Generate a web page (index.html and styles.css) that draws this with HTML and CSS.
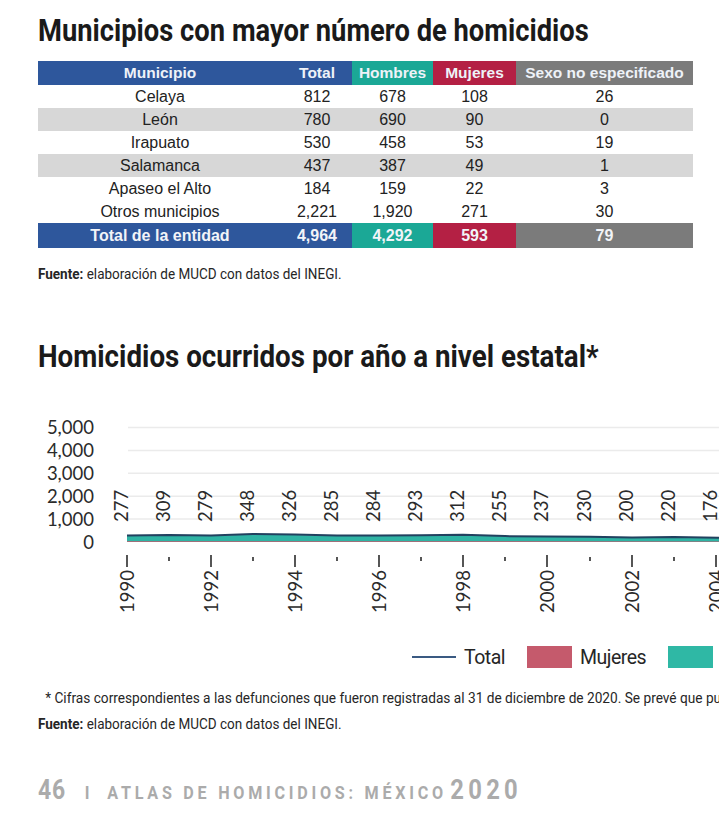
FILE: index.html
```html
<!DOCTYPE html>
<html lang="es">
<head>
<meta charset="utf-8">
<title>Atlas de homicidios</title>
<link rel="stylesheet" href="styles.css">
</head>
<body>
<div class="page">
  <section class="block">
    <h1 class="title t1">Municipios con mayor número de homicidios</h1>
    <table class="mun">
      <colgroup>
        <col class="c1"><col class="c2"><col class="c3"><col class="c4"><col class="c5">
      </colgroup>
      <thead>
        <tr>
          <th class="bg-blue">Municipio</th>
          <th class="bg-blue">Total</th>
          <th class="bg-teal">Hombres</th>
          <th class="bg-red">Mujeres</th>
          <th class="bg-gray">Sexo no especificado</th>
        </tr>
      </thead>
      <tbody>
        <tr><td>Celaya</td><td>812</td><td>678</td><td>108</td><td>26</td></tr>
        <tr class="alt"><td>León</td><td>780</td><td>690</td><td>90</td><td>0</td></tr>
        <tr><td>Irapuato</td><td>530</td><td>458</td><td>53</td><td>19</td></tr>
        <tr class="alt"><td>Salamanca</td><td>437</td><td>387</td><td>49</td><td>1</td></tr>
        <tr><td>Apaseo el Alto</td><td>184</td><td>159</td><td>22</td><td>3</td></tr>
        <tr><td>Otros municipios</td><td>2,221</td><td>1,920</td><td>271</td><td>30</td></tr>
        <tr class="tot">
          <td class="bg-blue">Total de la entidad</td>
          <td class="bg-blue">4,964</td>
          <td class="bg-teal">4,292</td>
          <td class="bg-red">593</td>
          <td class="bg-gray">79</td>
        </tr>
      </tbody>
    </table>
    <p class="src src1"><b>Fuente:</b> elaboración de MUCD con datos del INEGI.</p>
    <h2 class="title t2">Homicidios ocurridos por año a nivel estatal*</h2>
  </section>

  <svg class="chart" width="719" height="225" viewBox="0 400 719 225" xmlns="http://www.w3.org/2000/svg">
    <g class="grid" stroke="#ebebeb" stroke-width="1.5">
      <line x1="128" y1="427.5" x2="719" y2="427.5"/>
      <line x1="128" y1="450.4" x2="719" y2="450.4"/>
      <line x1="128" y1="473.3" x2="719" y2="473.3"/>
      <line x1="128" y1="496.2" x2="719" y2="496.2"/>
      <line x1="128" y1="519.1" x2="719" y2="519.1"/>
    </g>
    <g class="ylab" text-anchor="end" font-size="18.5" fill="#2b2b2b">
      <text x="94" y="434">5,000</text>
      <text x="94" y="456.9">4,000</text>
      <text x="94" y="479.8">3,000</text>
      <text x="94" y="502.7">2,000</text>
      <text x="94" y="525.6">1,000</text>
      <text x="94" y="548.5">0</text>
    </g>
    <polygon fill="#2fb3a4" points="127,542 127,535.8 169,535.2 211,535.8 253,534.5 295,534.9 337,535.6 379,535.7 421,535.5 463,535.1 505,536.3 547,536.6 590,536.8 632,537.4 674,537 719,537.8 719,542"/>
    <polygon fill="#c45a6c" points="127,542 127,541.3 719,541.4 719,542"/>
    <polyline fill="none" stroke="#21415f" stroke-width="2" points="127,535.6 169,534.9 211,535.6 253,534 295,534.5 337,535.4 379,535.4 421,535.2 463,534.8 505,536.1 547,536.5 590,536.7 632,537.4 674,536.9 719,537.8"/>
    <g class="vlab" font-size="18.5" fill="#2b2b2b">
      <text transform="translate(128,522) rotate(-90)">277</text>
      <text transform="translate(170,522) rotate(-90)">309</text>
      <text transform="translate(212,522) rotate(-90)">279</text>
      <text transform="translate(254,522) rotate(-90)">348</text>
      <text transform="translate(296,522) rotate(-90)">326</text>
      <text transform="translate(338,522) rotate(-90)">285</text>
      <text transform="translate(380,522) rotate(-90)">284</text>
      <text transform="translate(422,522) rotate(-90)">293</text>
      <text transform="translate(464,522) rotate(-90)">312</text>
      <text transform="translate(506,522) rotate(-90)">255</text>
      <text transform="translate(548,522) rotate(-90)">237</text>
      <text transform="translate(591,522) rotate(-90)">230</text>
      <text transform="translate(633,522) rotate(-90)">200</text>
      <text transform="translate(675,522) rotate(-90)">220</text>
      <text transform="translate(717,522) rotate(-90)">176</text>
    </g>
    <g class="ticks" stroke="#2b2b2b" stroke-width="1.6">
      <line x1="127" y1="555" x2="127" y2="567"/>
      <line x1="169" y1="557" x2="169" y2="561"/>
      <line x1="211" y1="555" x2="211" y2="567"/>
      <line x1="253" y1="557" x2="253" y2="561"/>
      <line x1="295" y1="555" x2="295" y2="567"/>
      <line x1="337" y1="557" x2="337" y2="561"/>
      <line x1="379" y1="555" x2="379" y2="567"/>
      <line x1="421" y1="557" x2="421" y2="561"/>
      <line x1="463" y1="555" x2="463" y2="567"/>
      <line x1="505" y1="557" x2="505" y2="561"/>
      <line x1="547" y1="555" x2="547" y2="567"/>
      <line x1="590" y1="557" x2="590" y2="561"/>
      <line x1="632" y1="555" x2="632" y2="567"/>
      <line x1="674" y1="557" x2="674" y2="561"/>
      <line x1="716" y1="555" x2="716" y2="567"/>
    </g>
    <g class="xlab" font-size="18.5" fill="#2b2b2b" text-anchor="end">
      <text transform="translate(134,570) rotate(-90)">1990</text>
      <text transform="translate(218,570) rotate(-90)">1992</text>
      <text transform="translate(302,570) rotate(-90)">1994</text>
      <text transform="translate(386,570) rotate(-90)">1996</text>
      <text transform="translate(470,570) rotate(-90)">1998</text>
      <text transform="translate(554,570) rotate(-90)">2000</text>
      <text transform="translate(639,570) rotate(-90)">2002</text>
      <text transform="translate(723,570) rotate(-90)">2004</text>
    </g>
  </svg>

  <div class="legend">
    <span class="lg-item"><span class="lg-line"></span>Total</span>
    <span class="lg-item"><span class="lg-box red"></span>Mujeres</span>
    <span class="lg-item"><span class="lg-box teal"></span>Hombres</span>
  </div>

  <section class="block notes">
    <p class="note">* Cifras correspondientes a las defunciones que fueron registradas al 31 de diciembre de 2020. Se prevé que puedan actualizarse.</p>
    <p class="src src2"><b>Fuente:</b> elaboración de MUCD con datos del INEGI.</p>
    <footer class="foot">
      <span class="pg">46</span>
      <span class="sep">I</span>
      <span class="book">ATLAS DE HOMICIDIOS: MÉXICO</span>
      <span class="yr">2020</span>
    </footer>
  </section>
</div>
</body>
</html>
```

FILE: styles.css
```css
* { box-sizing: border-box; }
html, body { margin: 0; padding: 0; background: #ffffff; }
body { width: 719px; height: 816px; overflow: hidden; color: #1c1c1c; }
.page { width: 719px; overflow: hidden; }
.block { padding-left: 38px; }

.title {
  font-family: "Roboto", "Liberation Sans", sans-serif;
  font-weight: 700;
  font-size: 32px;
  line-height: 38px;
  margin: 0;
  color: #1a1a1a;
  white-space: nowrap;
  transform-origin: 0 50%;
}
.t1 { padding-top: 11px; transform: scaleX(0.854); }
.t2 { margin-top: 54px; transform: scaleX(0.867); }

.mun {
  margin-top: 12px;
  border-collapse: collapse;
  table-layout: fixed;
  width: 655px;
  font-family: "Liberation Sans", Arial, sans-serif;
  font-size: 16px;
  color: #222;
}
.c1 { width: 244px; }
.c2 { width: 70px; }
.c3 { width: 81px; }
.c4 { width: 83px; }
.c5 { width: 177px; }
.mun th, .mun td { padding: 0; text-align: center; white-space: nowrap; }
.mun th {
  height: 24px;
  font-size: 15.5px;
  font-weight: 700;
  color: #eef2f8;
}
.mun td { height: 23px; }
.mun tr.alt td { background: #d7d7d7; }
.mun tr.tot td { height: 25px; font-weight: 700; color: #f2f4f8; }
.bg-blue { background: #2e579c; }
.bg-teal { background: #1ba896; }
.bg-red { background: #b42044; }
.bg-gray { background: #7b7b7b; }

.src, .note {
  font-family: "Roboto", "Liberation Sans", sans-serif;
  line-height: 18px;
  margin: 0;
  color: #262626;
  white-space: nowrap;
  transform: scaleX(0.9);
  transform-origin: 0 50%;
}
.src { font-size: 15px; }
.note { font-size: 15.2px; }
.src b { font-weight: 700; }
.src1 { margin-top: 17px; }

.chart { display: block; margin-top: 25px; }
.chart text { font-family: "Lato", "Liberation Sans", sans-serif; }

.legend {
  display: flex;
  gap: 22px;
  padding-left: 412px;
  margin-top: 20px;
  height: 24px;
  align-items: center;
  white-space: nowrap;
  font-family: "Roboto", "Liberation Sans", sans-serif;
  font-size: 19.5px;
  letter-spacing: -0.5px;
  color: #262626;
}
.lg-item { display: flex; align-items: center; gap: 8px; }
.lg-line { width: 44px; height: 2px; background: #3a5a82; }
.lg-box { width: 45px; height: 22px; }
.lg-box.red { background: #c55a6c; }
.lg-box.teal { background: #2fb8a5; }

.note { margin-top: 20px; padding-left: 8px; }
.src2 { margin-top: 8px; }

.foot {
  margin-top: 40px;
  display: flex;
  align-items: baseline;
  color: #ababab;
  font-family: "Roboto", "Liberation Sans", sans-serif;
  font-weight: 700;
  white-space: nowrap;
  transform: scaleX(0.85);
  transform-origin: 0 50%;
}
.pg { font-size: 27px; letter-spacing: 1px; }
.sep { font-size: 19px; margin: 0 21px 0 22px; }
.book { font-size: 19px; letter-spacing: 4.4px; margin-right: 4px; }
.yr { font-size: 28px; letter-spacing: 5px; }
```
